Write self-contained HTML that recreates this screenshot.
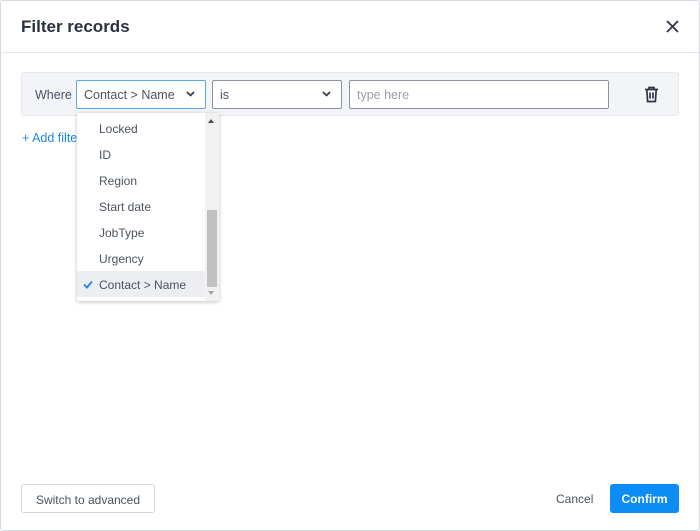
<!DOCTYPE html>
<html><head><style>
*{box-sizing:border-box;margin:0;padding:0}
body{width:700px;height:531px;background:#fff;font-family:"Liberation Sans",sans-serif;position:relative;overflow:hidden;color:#374151}
.frame{position:absolute;left:0;top:0;width:700px;height:531px;border:1px solid #d6d9de;border-radius:3px}
.title{position:absolute;left:21px;top:17px;font-size:17px;font-weight:bold;color:#2a3140}
.hline{position:absolute;left:1px;right:1px;top:52px;height:1px;background:#e3e6ea}
.row{position:absolute;left:21px;top:72px;width:658px;height:44px;background:#f3f4f7;border:1px solid #e6e8ec;border-radius:3px}
.abs{position:absolute}
.sel{position:absolute;height:29px;border:1px solid #8b929c;border-radius:2px;background:#fff;font-size:12.5px;padding:7px 7px;color:#4b5260}
.chev{position:absolute;right:10px;top:10px}
.dd{position:absolute;left:77px;top:113px;width:142px;height:188px;background:#fff;box-shadow:0 1px 4px rgba(0,0,0,.25);border-radius:2px}
.it{position:absolute;left:22px;font-size:12px;color:#4b5260}
.btn{position:absolute;font-size:12px;border-radius:3px}
</style></head><body>
<div class="frame"></div>
<div class="title">Filter records</div>
<svg class="abs" style="left:666px;top:20px" width="13" height="13" viewBox="0 0 13 13"><path d="M1 1L12 12M12 1L1 12" stroke="#2f3542" stroke-width="1.8"/></svg>
<div class="hline"></div>
<div class="row"></div>
<div class="abs" style="left:35px;top:88px;font-size:12.5px;color:#4b5260">Where</div>
<div class="sel" style="left:76px;top:80px;width:130px;border-color:#5aa7e6">Contact &gt; Name<svg class="chev" width="9" height="6" viewBox="0 0 9 6"><path d="M1 1L4.5 4.5L8 1" stroke="#333" stroke-width="1.6" fill="none"/></svg></div>
<div class="sel" style="left:212px;top:80px;width:130px">is<svg class="chev" width="9" height="6" viewBox="0 0 9 6"><path d="M1 1L4.5 4.5L8 1" stroke="#333" stroke-width="1.6" fill="none"/></svg></div>
<div class="sel" style="left:349px;top:80px;width:260px;color:#9aa0a8">type here</div>
<svg class="abs" style="left:644px;top:86px" width="15" height="17" viewBox="0 0 15 17"><path d="M1 3.5H14M5 3.5V1.5H10V3.5M2.8 3.5L3.6 15.5H11.4L12.2 3.5M6 6.5V12.5M9 6.5V12.5" stroke="#2f3542" stroke-width="1.7" fill="none"/></svg>
<div class="abs" style="left:22px;top:131px;font-size:12.5px;color:#1a8ae6">+ Add filter</div>
<div class="dd">
<div class="abs" style="left:0;top:158px;width:128px;height:26px;background:#eceef2"></div>
<div class="it" style="top:9px">Locked</div>
<div class="it" style="top:35px">ID</div>
<div class="it" style="top:61px">Region</div>
<div class="it" style="top:87px">Start date</div>
<div class="it" style="top:113px">JobType</div>
<div class="it" style="top:139px">Urgency</div>
<div class="it" style="top:165px">Contact &gt; Name</div>
<svg class="abs" style="left:6px;top:167px" width="10" height="9" viewBox="0 0 10 9"><path d="M1 4.5L4 7.5L9 1.5" stroke="#1a8ae6" stroke-width="1.8" fill="none"/></svg>
<div class="abs" style="left:128px;top:0;width:14px;height:188px;background:#f1f1f1"></div>
<div class="abs" style="left:130px;top:97px;width:10px;height:77px;background:#c1c1c1"></div>
<div class="abs" style="left:131px;top:6px;width:0;height:0;border-left:3px solid transparent;border-right:3px solid transparent;border-bottom:4px solid #505050"></div>
<div class="abs" style="left:131px;top:178px;width:0;height:0;border-left:3px solid transparent;border-right:3px solid transparent;border-top:4px solid #a3a3a3"></div>
</div>
<div class="btn" style="left:21px;top:484px;width:134px;height:29px;border:1px solid #d3d6db;padding:8px 0;text-align:center;color:#4b5260">Switch to advanced</div>
<div class="btn" style="left:556px;top:492px;color:#4b5260">Cancel</div>
<div class="btn" style="left:610px;top:484px;width:69px;height:29px;background:#0c8cf5;color:#fff;font-weight:bold;text-align:center;padding:8px 0">Confirm</div>
</body></html>
